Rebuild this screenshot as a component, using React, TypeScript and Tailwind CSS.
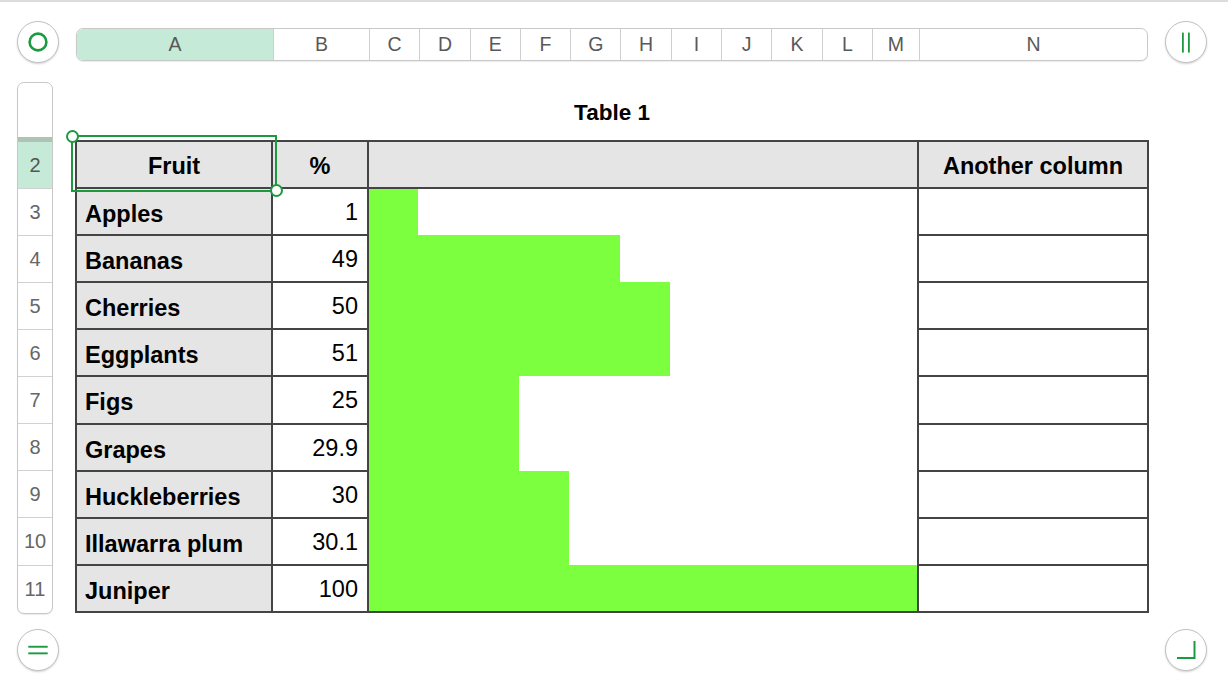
import React from "react"

type Fruit = { row: number; name: string; pct: string; bar: number }

// bar widths follow the cells the fill covers in columns C–M
const fruits: Fruit[] = [
  { row: 3, name: "Apples", pct: "1", bar: 49 },
  { row: 4, name: "Bananas", pct: "49", bar: 251 },
  { row: 5, name: "Cherries", pct: "50", bar: 301 },
  { row: 6, name: "Eggplants", pct: "51", bar: 301 },
  { row: 7, name: "Figs", pct: "25", bar: 150 },
  { row: 8, name: "Grapes", pct: "29.9", bar: 150 },
  { row: 9, name: "Huckleberries", pct: "30", bar: 200 },
  { row: 10, name: "Illawarra plum", pct: "30.1", bar: 200 },
  { row: 11, name: "Juniper", pct: "100", bar: 548 },
]

const midCols = ["C", "D", "E", "F", "G", "H", "I", "J", "K", "L"]

const CircleButton: React.FC<{ children: React.ReactNode }> = ({ children }) => (
  <div className="w-[42px] h-[42px] shrink-0 rounded-full bg-white border border-[#c2c2c2] shadow-[0_1px_2px_rgba(0,0,0,0.18)] overflow-hidden">
    <svg width="40" height="40" viewBox="1 1 40 40" fill="none">
      {children}
    </svg>
  </div>
)

const GREEN = "#1c9a40"

export default function App() {
  return (
    <div className="w-[1228px] h-[694px] bg-white border-t-2 border-[#dcdcdc] overflow-hidden font-['Liberation_Sans',Arial,sans-serif]">
      {/* Top bar: select-all button, column letters, freeze button */}
      <div className="flex items-start pl-[17px] pt-[19px]">
        <CircleButton>
          <circle cx="21" cy="21" r="8.4" stroke={GREEN} strokeWidth="2.6" />
        </CircleButton>

        <div className="ml-[17px] mt-[7px] h-[33px] w-[1072px] flex rounded-[7px] border border-[#c9c9c9] overflow-hidden bg-white shadow-[0_1px_1px_rgba(0,0,0,0.08)] text-[19.5px] text-[#595959]">
          <div className="w-[196px] bg-[#c5ead7] flex items-center justify-center">A</div>
          <div className="w-[96px] border-l border-[#cfcfcf] flex items-center justify-center">B</div>
          {midCols.map((c) => (
            <div key={c} className="w-[50.3px] border-l border-[#cfcfcf] flex items-center justify-center">
              {c}
            </div>
          ))}
          <div className="w-[47px] border-l border-[#cfcfcf] flex items-center justify-center">M</div>
          <div className="flex-1 border-l border-[#cfcfcf] flex items-center justify-center">N</div>
        </div>

        <div className="ml-[17px]">
          <CircleButton>
            <rect x="17" y="11.6" width="1.8" height="20" fill={GREEN} />
            <rect x="23" y="11.6" width="1.8" height="20" fill={GREEN} />
          </CircleButton>
        </div>
      </div>

      {/* Row numbers + table */}
      <div className="flex items-start pl-[17px] mt-[19px]">
        <div className="w-[36px] rounded-[7px] border border-[#c8c8c8] overflow-hidden bg-white shadow-[0_1px_1px_rgba(0,0,0,0.08)] text-[20px] text-[#666]">
          <div className="h-[54px]" />
          <div className="h-[4.7px] bg-[#adc3b3]" />
          <div className="h-[47.1px] bg-[#c5ead7] border-b border-[#d2d2d2] flex items-center justify-center text-[#555]">
            2
          </div>
          {fruits.map((f, i) => (
            <div
              key={f.row}
              className={`h-[47.1px] flex items-center justify-center ${i < fruits.length - 1 ? "border-b border-[#d2d2d2]" : ""}`}
            >
              {f.row}
            </div>
          ))}
        </div>

        <div className="ml-[22px] w-[1074px]">
          <div className="h-[57.5px] pt-[5px] flex items-center justify-center text-[22.5px] font-bold text-black">
            Table 1
          </div>

          <div className="relative">
            <div className="grid grid-cols-[194px_94px_548px_228px] grid-rows-[repeat(10,45.2px)] gap-[2px] p-[2px] bg-[#444] text-[23.5px] text-black">
              <div className="bg-[#e5e5e5] flex items-center justify-center pt-[5px] font-bold">Fruit</div>
              <div className="bg-[#e5e5e5] flex items-center justify-center pt-[5px] font-bold">%</div>
              <div className="bg-[#e5e5e5]" />
              <div className="bg-[#e5e5e5] flex items-center justify-center pt-[5px] font-bold">Another column</div>

              {fruits.map((f, i) => (
                <React.Fragment key={f.row}>
                  <div className="bg-[#e5e5e5] flex items-center pl-[8px] pt-[6px] font-bold whitespace-nowrap">
                    {f.name}
                  </div>
                  <div className="bg-white flex items-center justify-end pr-[9px] pt-[2px]">{f.pct}</div>
                  {i === 0 && (
                    <div className="row-span-9 bg-white flex flex-col">
                      {fruits.map((b, j) => (
                        <div
                          key={b.row}
                          className={j === 0 || j === fruits.length - 1 ? "h-[46.2px]" : "h-[47.2px]"}
                        >
                          <div className="h-full bg-[#7bff3f]" style={{ width: b.bar }} />
                        </div>
                      ))}
                    </div>
                  )}
                  <div className="bg-white" />
                </React.Fragment>
              ))}
            </div>

            {/* Selection around the Fruit cell */}
            <div className="absolute left-[-4px] top-[-4.5px] w-[206px] h-[56.5px] border-2 border-[#1c9a40] pointer-events-none" />
            <div className="absolute left-[-9.5px] top-[-10px] w-[13px] h-[13px] rounded-full bg-white border-2 border-[#1c9a40]" />
            <div className="absolute left-[194.5px] top-[44.5px] w-[13px] h-[13px] rounded-full bg-white border-2 border-[#1c9a40]" />
          </div>
        </div>
      </div>

      {/* Bottom buttons */}
      <div className="flex justify-between pl-[17px] pr-[21px] mt-[15.5px]">
        <CircleButton>
          <rect x="11.3" y="16.8" width="19.4" height="1.9" fill={GREEN} />
          <rect x="11.3" y="23.4" width="19.4" height="1.9" fill={GREEN} />
        </CircleButton>
        <CircleButton>
          <path d="M12 29 H29.5 V12" stroke={GREEN} strokeWidth="2" />
        </CircleButton>
      </div>
    </div>
  )
}
